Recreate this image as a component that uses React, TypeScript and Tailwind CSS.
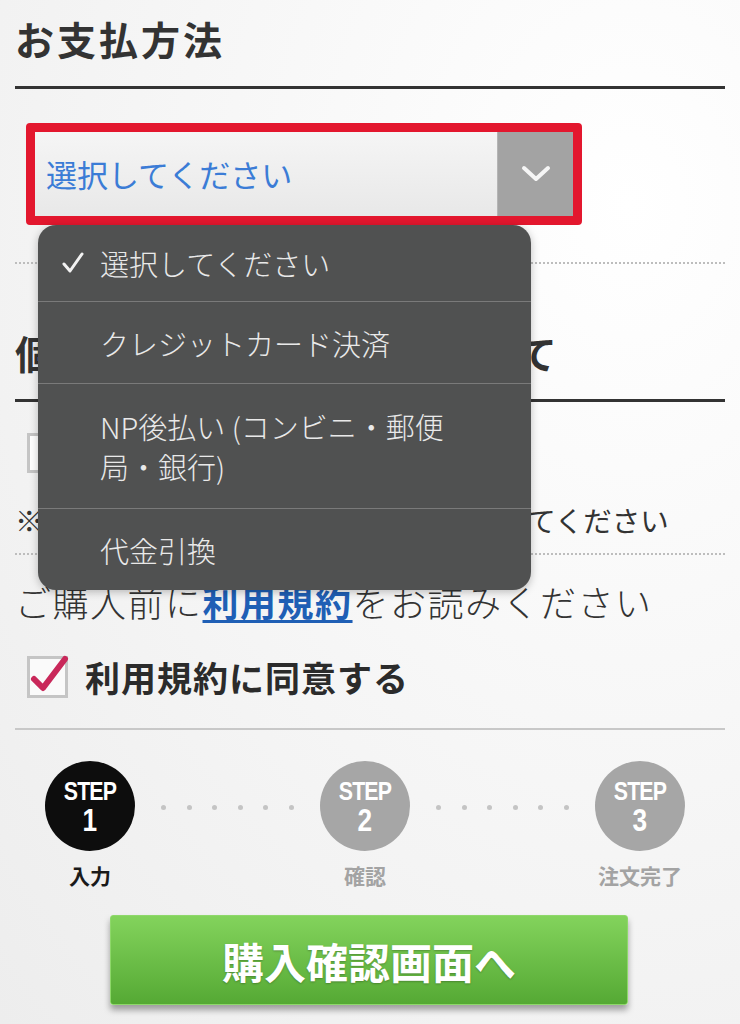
// お支払方法 選択画面（ドロップダウン展開中）
import React, { useState } from 'react'

const paymentOptions = [
  { label: '選択してください', lines: 1 },
  { label: 'クレジットカード決済', lines: 1 },
  { label: 'NP後払い (コンビニ・郵便局・銀行)', lines: 2 },
  { label: '代金引換', lines: 1 },
]

const steps = [
  { num: '1', label: '入力', active: true },
  { num: '2', label: '確認', active: false },
  { num: '3', label: '注文完了', active: false },
]

const StepDots = () => (
  <div className="flex-1 flex items-center justify-evenly px-[6px] -mt-[34px]">
    {[0, 1, 2, 3, 4, 5].map((i) => (
      <span key={i} className="w-[5px] h-[5px] rounded-full bg-[#c4c4c4]" />
    ))}
  </div>
)

export default function App() {
  const [selected] = useState(0)
  const [agreed, setAgreed] = useState(true)

  return (
    <div className="relative w-full min-h-[1024px] overflow-hidden bg-[radial-gradient(ellipse_at_85%_20%,#ffffff_0%,#f7f7f7_45%,#ededed_100%)] font-['Noto_Sans_CJK_JP','Liberation_Sans',sans-serif] text-[#333]">
      <div className="px-[15px]">
        {/* お支払方法 */}
        <div className="h-[89px] border-b-[3px] border-[#333] pt-[15px]">
          <h2 className="text-[39px] leading-[46px] font-bold tracking-[3px]">お支払方法</h2>
        </div>

        <div className="pt-[34px] pb-[37px] border-b-2 border-dotted border-[#bdbdbd]">
          <div className="ml-[11px] w-[556px] h-[102px] border-[9px] border-[#e3172e] rounded-[4px] flex">
            <div className="flex-1 flex items-center pl-[11px] bg-[linear-gradient(#f5f5f5,#e8e8e8)] text-[31px] text-[#3b7cd6]">
              選択してください
            </div>
            <div className="w-[76px] bg-[#a3a3a3] border-l border-[#b5b5b5] flex items-center justify-center">
              <svg width="30" height="18" viewBox="0 0 30 18" fill="none">
                <path d="M3 3 L15 14 L27 3" stroke="#ffffff" strokeWidth="4" strokeLinecap="round" strokeLinejoin="round" opacity="0.9" />
              </svg>
            </div>
          </div>
        </div>

        {/* 個人情報 */}
        <div className="h-[138px] border-b-[3px] border-[#333] pt-[65px]">
          <h2 className="text-[39px] leading-[46px] font-bold tracking-[3px]">個人情報の取り扱いについて</h2>
        </div>

        <div className="pt-[31px] pb-[13px] border-b-2 border-dotted border-[#bdbdbd]">
          <div className="ml-[12px] flex items-center gap-[17px] h-[40px]">
            <span className="w-[40px] h-[40px] border-[3px] border-[#c5c5c5] bg-white" />
            <span className="text-[35px] font-bold">同意する</span>
          </div>
          <p className="mt-[27px] text-[28.5px] leading-[40px]">※上記に同意の上、必ずチェックを入れてください</p>
        </div>

        {/* 利用規約 */}
        <p className="pt-[23px] text-[36px] leading-[46px] tracking-[1.5px] font-light whitespace-nowrap">
          ご購入前に<a href="#" className="text-[#1f5fb5] font-bold underline underline-offset-[3px]">利用規約</a>をお読みください
        </p>

        <div className="pt-[32px] pb-[30px] border-b-2 border-[#c8c8c8]">
          <button onClick={() => setAgreed(!agreed)} className="ml-[12px] flex items-center gap-[17px] h-[42px]">
            <span className="relative w-[41px] h-[42px] border-[3px] border-[#c5c5c5] bg-[#fafafa]">
              {agreed && (
                <svg className="absolute -left-[3px] -top-[6px]" width="46" height="46" viewBox="0 0 46 46" fill="none">
                  <path d="M7 26 L16 35 L38 6" stroke="#c9285a" strokeWidth="6" strokeLinecap="round" strokeLinejoin="round" />
                </svg>
              )}
            </span>
            <span className="text-[35px] font-bold tracking-[1px] text-[#2b2b2b]">利用規約に同意する</span>
          </button>
        </div>

        {/* STEP */}
        <div className="pt-[31px] ml-[30px] w-[640px] flex">
          {steps.map((s, i) => (
            <React.Fragment key={s.num}>
              <div className="w-[90px] flex flex-col items-center">
                <div
                  className={
                    s.active
                      ? 'w-[90px] h-[90px] rounded-full bg-[#0d0d0d] flex flex-col items-center justify-center pt-[2px] text-white font-["Liberation_Sans",sans-serif] font-bold'
                      : 'w-[90px] h-[90px] rounded-full bg-[#a6a6a6] flex flex-col items-center justify-center pt-[2px] text-white font-["Liberation_Sans",sans-serif] font-bold'
                  }
                >
                  <span className="text-[26px] leading-[26px] tracking-[-1px] scale-x-[0.82]">STEP</span>
                  <span className="text-[32px] leading-[32px] scale-x-[0.82]">{s.num}</span>
                </div>
                <span
                  className={
                    s.active
                      ? 'mt-[12px] text-[21px] leading-[24px] font-bold text-[#1a1a1a] whitespace-nowrap'
                      : 'mt-[12px] text-[21px] leading-[24px] font-bold text-[#a3a3a3] whitespace-nowrap'
                  }
                >
                  {s.label}
                </span>
              </div>
              {i < steps.length - 1 && <StepDots />}
            </React.Fragment>
          ))}
        </div>

        <button className="mt-[28px] ml-[95px] w-[518px] h-[90px] rounded-[3px] border border-[#8ed86a] bg-[linear-gradient(#83d35c,#55a934)] shadow-[0_5px_6px_rgba(0,0,0,0.35)] flex items-center justify-center">
          <span className="text-[42px] font-bold text-white [text-shadow:0_1px_2px_rgba(0,0,0,0.25)]">購入確認画面へ</span>
        </button>
      </div>

      {/* 展開中のドロップダウン */}
      <div className="absolute left-[38px] top-[225px] w-[493px] rounded-[18px] bg-[#505151] text-[#e9e9e9] text-[29px] font-light shadow-[0_2px_8px_rgba(0,0,0,0.25)] overflow-hidden">
        {paymentOptions.map((opt, i) => (
          <div
            key={opt.label}
            className={
              i === 0
                ? 'relative h-[76px] flex items-center pl-[62px] pr-[60px]'
                : opt.lines === 2
                  ? 'relative h-[125px] flex items-center pl-[62px] pr-[60px] border-t border-[#7a7a7a]'
                  : 'relative h-[82px] flex items-center pl-[62px] pr-[60px] border-t border-[#7a7a7a]'
            }
          >
            {i === selected && (
              <svg className="absolute left-[24px] top-[27px]" width="22" height="22" viewBox="0 0 22 22" fill="none">
                <path d="M2 12 L8 19 L20 2" stroke="#f2f2f2" strokeWidth="3" strokeLinecap="round" strokeLinejoin="round" />
              </svg>
            )}
            <span className="leading-[40px]">{opt.label}</span>
          </div>
        ))}
      </div>
    </div>
  )
}
